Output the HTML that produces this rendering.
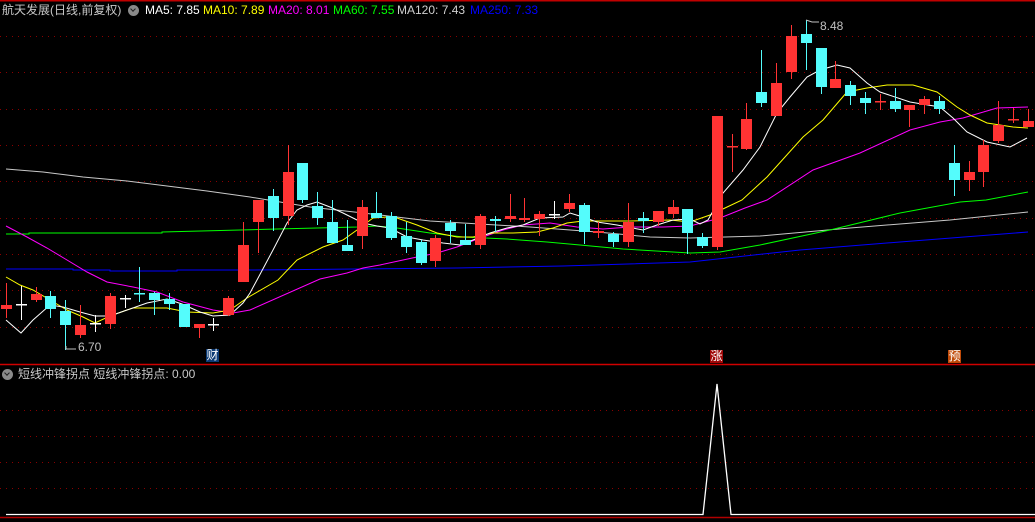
<!DOCTYPE html>
<html><head><meta charset="utf-8"><style>
html,body{margin:0;padding:0;background:#000;width:1035px;height:522px;overflow:hidden;position:relative;font-family:"Liberation Sans","Noto Sans CJK SC",sans-serif;}
.t{position:absolute;font-size:12px;white-space:nowrap;line-height:14px}
svg{position:absolute;left:0;top:0}
.ic{position:absolute;width:11px;height:11px;border-radius:50%;background:#8a8a8a}
.ic:after{content:"";position:absolute;left:3px;top:2px;width:3px;height:3px;border-right:1.5px solid #222;border-bottom:1.5px solid #222;transform:rotate(45deg)}
.mk{position:absolute;font-size:12px;line-height:13px;width:13px;height:13px;color:#fff;text-align:center}
</style></head><body>
<svg id="s" width="1035" height="522" viewBox="0 0 1035 522"></svg>
<div class="t" style="left:2px;top:3px;color:#c8c8c8">航天发展(日线,前复权)</div>
<div class="ic" style="left:128px;top:5px"></div>
<div class="t" style="left:145px;top:3px;color:#fff">MA5: 7.85</div>
<div class="t" style="left:203px;top:3px;color:#ffff00">MA10: 7.89</div>
<div class="t" style="left:268px;top:3px;color:#ff00ff">MA20: 8.01</div>
<div class="t" style="left:333px;top:3px;color:#00ff00">MA60: 7.55</div>
<div class="t" style="left:397px;top:3px;color:#d0d0d0">MA120: 7.43</div>
<div class="t" style="left:470px;top:3px;color:#0000ff">MA250: 7.33</div>
<div class="t" style="left:820px;top:19px;color:#c0c0c0">8.48</div>
<div class="t" style="left:78px;top:340px;color:#c0c0c0">6.70</div>
<div class="mk" style="left:206px;top:349px;background:#0b3a74">财</div>
<div class="mk" style="left:710px;top:350px;background:#a00808">涨</div>
<div class="mk" style="left:948px;top:350px;background:#c04a08">预</div>
<div class="ic" style="left:2px;top:369px"></div>
<div class="t" style="left:18px;top:367px;color:#c8c8c8">短线冲锋拐点 短线冲锋拐点: 0.00</div>
<script>
var s=document.getElementById('s'),h='';
h+='<line x1="0" y1="0.5" x2="1035" y2="0.5" stroke="#c00000" stroke-width="2"/>';
[36,72,109,145,181,218,254,290,327].forEach(function(y){h+='<line x1="0" y1="'+(y+.5)+'" x2="1035" y2="'+(y+.5)+'" stroke="#8a0000" stroke-dasharray="1,5"/>';});
[410,436,462,488].forEach(function(y){h+='<line x1="0" y1="'+(y+.5)+'" x2="1035" y2="'+(y+.5)+'" stroke="#8a0000" stroke-dasharray="1,5"/>';});
h+='<line x1="0" y1="364.5" x2="1035" y2="364.5" stroke="#d00000" stroke-width="1.5"/>';
h+='<line x1="0" y1="517.5" x2="1035" y2="517.5" stroke="#b00000" stroke-width="1.5"/>';
function pl(p,c){h+='<polyline fill="none" stroke="'+c+'" stroke-width="1" points="'+p+'"/>';}
pl("6,269 73,269 73,270 110,270 110,271 177,271 177,270 250,270 457,268 563,266 690,262 800,250 900,242 1028,232","#0000ff");
pl("6,169 43,172 83,177 127,181 167,186 207,191 250,197 310,207 363,213 430,221 463,223 530,227 597,232 650,237 690,238 760,236 850,228 950,220 1028,212","#c8c8c8");
pl("6,234 29,234 29,233 162,233 162,232 277,229 357,227 377,226 397,228 430,233 463,237 507,239 547,242 580,245 623,249 690,253 720,252 760,245 830,230 900,213 960,202 986,200 1028,192","#00ff00");
pl("6,226 27,237 47,248 67,260 87,272 107,282 133,287 157,292 183,302 213,310 233,313 250,310 320,279 347,273 363,268 380,265 403,260 417,257 437,253 457,247 480,238 503,230 523,225 550,223 577,227 603,229 630,227 663,227 690,226 720,218 745,208 767,200 813,170 860,153 910,130 940,122 963,118 997,108 1028,107","#ff00ff");
pl("6,277 20,285 33,290 50,300 67,310 83,317 95,323 110,316 127,310 133,308 167,308 187,312 213,313 230,310 247,298 278,280 297,260 323,247 343,240 357,230 373,218 387,217 397,218 417,225 437,233 457,237 473,237 493,233 513,233 537,232 553,228 567,223 583,221 630,221 670,220 690,222 710,215 725,208 742,200 767,177 803,137 823,120 847,92 867,88 887,85 913,85 937,92 957,107 970,115 987,123 1013,127 1028,128","#ffff00");
pl("6,320 21,333 33,320 50,305 63,307 80,312 95,316 110,316 127,310 147,303 167,299 182,304 200,312 213,316 230,315 243,303 250,293 257,280 273,250 287,223 297,210 307,205 317,202 330,207 343,213 363,223 377,226 390,228 407,237 423,240 443,243 460,245 473,240 490,233 507,228 523,225 540,218 563,217 570,213 583,217 597,222 617,225 643,230 657,225 673,220 690,219 700,224 708,220 723,193 743,170 760,147 777,113 790,97 807,77 820,70 837,65 850,68 867,83 880,92 910,102 940,107 953,118 967,132 987,142 1010,147 1027,138","#ffffff");
var R="#ff3333",C="#54fcfc",W="#ffffff";
var d=[[6,R,305,309,283,318],[21,W,304,304,286,320],[36,R,294,300,287,302],[50,C,296,309,291,318],[65,C,311,325,300,350],[80,R,325,335,305,338],[95,W,323,323,315,332],[110,R,296,324,293,329],[125,W,298,298,295,308],[139,C,293,293,267,302],[154,C,293,300,292,315],[169,C,299,304,293,310],[184,C,304,327,304,327],[199,R,324,328,324,338],[213,W,324,324,318,331],[228,R,298,315,296,316],[243,R,245,282,222,282],
[258,R,200,222,222,253],[273,C,196,218,189,231],[288,R,172,216,145,225],[302,C,163,200,163,203],[317,C,206,218,192,225],[332,C,222,243,200,243],[347,C,245,251,220,251],[362,R,207,236,200,249],[376,C,213,218,192,218],[391,C,216,238,212,240],[406,C,236,247,222,253],[421,C,242,263,240,265],[435,R,238,261,235,267],[450,C,223,231,220,243],[465,C,240,245,224,245],[480,R,216,245,214,249],[495,C,219,221,216,232],[510,R,216,219,194,222],[524,R,218,220,198,222],[539,R,214,219,211,236],[554,W,214,214,201,219],[569,R,203,209,194,212],[584,C,205,232,203,244],[598,R,231,233,222,238],[613,C,234,242,232,247],[628,R,222,242,203,247],[643,C,218,221,212,233],[658,R,211,222,211,226],[673,R,207,214,200,218],[687,C,209,233,209,254],[702,C,237,246,233,248],[717,R,116,247,116,250],[732,R,146,147,134,172],[746,R,119,149,103,150],[761,C,92,103,50,107],[776,R,83,116,63,116],[791,R,36,72,25,79],[806,C,34,43,20,70],[821,C,48,87,48,94],[835,R,79,88,61,88],[850,C,85,96,81,105],[865,C,98,103,92,114],[880,R,101,102,94,110],[895,C,101,109,88,112],[909,R,105,110,105,127],[924,R,99,105,96,114],[939,C,101,109,96,114],[954,C,163,180,145,196],[969,R,172,180,161,191],[983,R,145,172,140,187],[998,R,125,141,101,143],[1013,R,119,120,108,123],[1028,R,121,127,109,127]];
d.forEach(function(c){var x=c[0];h+='<line x1="'+(x+.5)+'" y1="'+c[4]+'" x2="'+(x+.5)+'" y2="'+c[5]+'" stroke="'+c[1]+'"/>';var bh=Math.max(c[3]-c[2],1.5);h+='<rect x="'+(x-5)+'" y="'+c[2]+'" width="11" height="'+bh+'" fill="'+c[1]+'"/>';});
h+='<polyline fill="none" stroke="#c0c0c0" points="806,20 812,22 819,22"/>';
h+='<polyline fill="none" stroke="#c0c0c0" points="66,346 66,349 76,349"/>';
h+='<polyline fill="none" stroke="#fff" stroke-width="1.3" points="6,514.5 703,514.5 717,384 731,514.5 1035,514.5"/>';
s.innerHTML=h;
</script>
</body></html>
